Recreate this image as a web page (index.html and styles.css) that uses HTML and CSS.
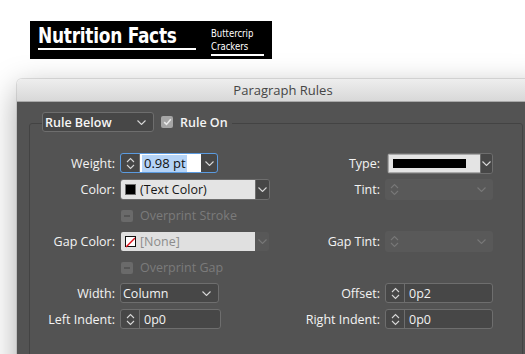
FILE: index.html
```html
<!DOCTYPE html>
<html lang="en">
<head>
  <meta charset="UTF-8">
  <title>Paragraph Rules</title>
  <link rel="stylesheet" href="styles.css">
</head>
<body>

  <div class="sample">
    <div class="sample-main"><span>Nutrition Facts</span></div>
    <div class="sample-side"><span>Buttercrip<br>Crackers</span></div>
  </div>

  <div class="dialog">
    <div class="titlebar">Paragraph Rules</div>
    <div class="panel">
      <div class="group">

        <div class="group-head">
          <div class="field dark select rule-select">
            <span class="text bold">Rule Below</span>
            <svg class="chev" width="9" height="5" viewBox="0 0 9 5"><path d="M.5.5 4.5 4.5 8.5.5"/></svg>
          </div>
          <span class="check on">
            <svg width="9" height="8" viewBox="0 0 9 8"><path d="M1.2 4.2 3.5 6.4 7.8 1.2"/></svg>
          </span>
          <span class="head-label">Rule On</span>
        </div>

        <div class="grid">
          <!-- row 1 -->
          <div class="lbl">Weight:</div>
          <div class="field focus w-98">
            <span class="spin">
              <svg width="9" height="13" viewBox="0 0 9 13"><path d="M1 5 4.5 1.5 8 5M1 8 4.5 11.5 8 8"/></svg>
            </span>
            <span class="input"><span class="sel">0.98 pt</span></span>
            <span class="drop">
              <svg class="chev" width="9" height="5" viewBox="0 0 9 5"><path d="M.5.5 4.5 4.5 8.5.5"/></svg>
            </span>
          </div>
          <div class="lbl">Type:</div>
          <div class="field light type">
            <span class="body"><span class="line-swatch"></span></span>
            <span class="drop">
              <svg class="chev" width="9" height="5" viewBox="0 0 9 5"><path d="M.5.5 4.5 4.5 8.5.5"/></svg>
            </span>
          </div>

          <!-- row 2 -->
          <div class="lbl">Color:</div>
          <div class="field light w-150">
            <span class="body"><span class="swatch black"></span><span class="text">(Text Color)</span></span>
            <span class="drop">
              <svg class="chev" width="9" height="5" viewBox="0 0 9 5"><path d="M.5.5 4.5 4.5 8.5.5"/></svg>
            </span>
          </div>
          <div class="lbl">Tint:</div>
          <div class="field off">
            <span class="spin">
              <svg width="9" height="13" viewBox="0 0 9 13"><path d="M1 5 4.5 1.5 8 5M1 8 4.5 11.5 8 8"/></svg>
            </span>
            <span class="grow"></span>
            <svg class="chev" width="9" height="5" viewBox="0 0 9 5"><path d="M.5.5 4.5 4.5 8.5.5"/></svg>
          </div>

          <!-- row 3 -->
          <div class="option span-right">
            <span class="check dim"></span>Overprint Stroke
          </div>

          <!-- row 4 -->
          <div class="lbl">Gap Color:</div>
          <div class="field light off-light w-150">
            <span class="body">
              <span class="swatch none">
                <svg width="11" height="11" viewBox="0 0 11 11"><path d="M0 11 11 0"/></svg>
              </span>
              <span class="text">[None]</span>
            </span>
            <span class="drop">
              <svg class="chev" width="9" height="5" viewBox="0 0 9 5"><path d="M.5.5 4.5 4.5 8.5.5"/></svg>
            </span>
          </div>
          <div class="lbl">Gap Tint:</div>
          <div class="field off">
            <span class="spin">
              <svg width="9" height="13" viewBox="0 0 9 13"><path d="M1 5 4.5 1.5 8 5M1 8 4.5 11.5 8 8"/></svg>
            </span>
            <span class="grow"></span>
            <svg class="chev" width="9" height="5" viewBox="0 0 9 5"><path d="M.5.5 4.5 4.5 8.5.5"/></svg>
          </div>

          <!-- row 5 -->
          <div class="option span-right">
            <span class="check dim"></span>Overprint Gap
          </div>

          <!-- row 6 -->
          <div class="lbl">Width:</div>
          <div class="field dark select w-99">
            <span class="text">Column</span>
            <svg class="chev" width="9" height="5" viewBox="0 0 9 5"><path d="M.5.5 4.5 4.5 8.5.5"/></svg>
          </div>
          <div class="lbl">Offset:</div>
          <div class="field dark">
            <span class="spin">
              <svg width="9" height="13" viewBox="0 0 9 13"><path d="M1 5 4.5 1.5 8 5M1 8 4.5 11.5 8 8"/></svg>
            </span>
            <span class="value">0p2</span>
          </div>

          <!-- row 7 -->
          <div class="lbl">Left Indent:</div>
          <div class="field dark w-101">
            <span class="spin">
              <svg width="9" height="13" viewBox="0 0 9 13"><path d="M1 5 4.5 1.5 8 5M1 8 4.5 11.5 8 8"/></svg>
            </span>
            <span class="value">0p0</span>
          </div>
          <div class="lbl">Right Indent:</div>
          <div class="field dark">
            <span class="spin">
              <svg width="9" height="13" viewBox="0 0 9 13"><path d="M1 5 4.5 1.5 8 5M1 8 4.5 11.5 8 8"/></svg>
            </span>
            <span class="value">0p0</span>
          </div>
        </div>

      </div>
    </div>
  </div>

</body>
</html>
```

FILE: styles.css
```css
/* pagina */
body {
  margin: 0;
  background-color: #ffffff;
  font-family: 'Open Sans', 'Liberation Sans', sans-serif;
  overflow: hidden;
}

/* amostra de texto no topo */
.sample {
  display: flex;
  width: 242px;
  height: 38px;
  margin: 21px 0 0 30px;
  background-color: #000;
  color: #fff;
  font-family: 'DejaVu Sans', sans-serif;
  font-stretch: condensed;
}

.sample-main {
  width: 158px;
  height: 21px;
  margin: 5px 0 0 8px;
  padding-bottom: 1px;
  border-bottom: 2px solid #fff;
  font-size: 21px;
  font-weight: bold;
  line-height: 21px;
  white-space: nowrap;
}

.sample-main span {
  display: inline-block;
  transform: scaleX(0.9);
  transform-origin: left center;
  letter-spacing: -0.3px;
}

.sample-side {
  width: 53px;
  height: 26px;
  margin: 6px 0 0 15px;
  padding-bottom: 1px;
  border-bottom: 2px solid #fff;
  font-size: 11px;
  line-height: 13px;
  white-space: nowrap;
}

.sample-side span {
  display: inline-block;
  transform: scaleX(0.86);
  transform-origin: left center;
}

/* janela */
.dialog {
  width: 532px;
  margin: 20px 0 0 17px;
  border-radius: 5px 5px 0 0;
  box-shadow: 0 10px 32px rgba(0, 0, 0, 0.35), 0 0 0 1px rgba(0, 0, 0, 0.1);
}

.titlebar {
  height: 22px;
  line-height: 22px;
  text-align: center;
  font-size: 13px;
  color: #454545;
  background: linear-gradient(#eeeeee, #d8d8d8);
  border-bottom: 1px solid #a8a8a8;
  border-radius: 5px 5px 0 0;
}

.panel {
  height: 260px;
  padding: 21px 0 0 12px;
  background-color: #535353;
}

.group {
  width: 492px;
  height: 240px;
  border: 1px solid #434343;
  border-radius: 3px;
}

.group-head {
  display: flex;
  align-items: center;
  width: fit-content;
  height: 20px;
  margin: -12px 0 0 12px;
  padding-right: 4px;
  background-color: #535353;
}

.head-label {
  margin-left: 7px;
  color: #f4f4f4;
  font-size: 12.5px;
  font-weight: 600;
}

/* grade de campos */
.grid {
  display: grid;
  grid-template-columns: 85px 150px 105px 108px;
  grid-auto-rows: 21px;
  gap: 5px;
  margin-top: 21px;
}

.lbl {
  text-align: right;
  line-height: 21px;
  font-size: 12.5px;
  color: #f4f4f4;
  white-space: nowrap;
}

.option {
  grid-column: 2 / span 3;
  display: flex;
  align-items: center;
  padding-left: 1px;
  font-size: 12.5px;
  color: #7b7b7b;
}

.option .check {
  margin-right: 7px;
}

/* caixas de selecao */
.check {
  display: inline-flex;
  align-items: center;
  justify-content: center;
  width: 12px;
  height: 12px;
  border-radius: 2px;
  box-sizing: border-box;
}

.check.on {
  margin-left: 7px;
  background-color: #a6a6a6;
}

.check.on path {
  fill: none;
  stroke: #e9e9e9;
  stroke-width: 1.6;
}

.check.dim {
  background-color: #6a6a6a;
}

.check.dim::after {
  content: "";
  width: 6px;
  height: 2px;
  background-color: #555555;
}

/* campos */
.field {
  display: flex;
  align-items: stretch;
  height: 20px;
  box-sizing: border-box;
  border-radius: 3px;
  font-size: 12.5px;
  overflow: hidden;
}

.field svg path {
  fill: none;
  stroke: #d6d6d6;
  stroke-width: 1.1;
}

.w-98 { width: 98px; }
.w-99 { width: 99px; }
.w-101 { width: 101px; }
.w-150 { width: 150px; height: 21px; }

.field.dark {
  background-color: #474747;
  border: 1px solid #6e6e6e;
  color: #f2f2f2;
}

.field.select {
  align-items: center;
  justify-content: space-between;
  padding: 0 7px 0 2px;
}

.rule-select {
  width: 112px;
}

.text.bold {
  font-weight: 600;
  color: #f6f6f6;
}

.spin {
  display: flex;
  align-items: center;
  justify-content: center;
  width: 18px;
  flex: none;
  border-right: 1px solid #6e6e6e;
}

.value {
  display: flex;
  align-items: center;
  padding-left: 4px;
}

.field.focus {
  background-color: #474747;
  border: 1px solid #5b9be0;
}

.field.focus .input {
  display: flex;
  align-items: center;
  width: 59px;
  padding-left: 2px;
  background-color: #ffffff;
  color: #111;
  font-size: 13px;
}

.sel {
  padding: 0 1px 0 2px;
  line-height: 17px;
  background-color: #b4d3f7;
}

.drop {
  display: flex;
  align-items: center;
  justify-content: center;
  flex: 1;
}

.field.light {
  border: 1px solid #6e6e6e;
}

.field.light .body {
  display: flex;
  align-items: center;
  width: 130px;
  padding-left: 4px;
  background-color: #e4e4e4;
  color: #161616;
}

.field.light .drop {
  background-color: #474747;
  border-left: 1px solid #6e6e6e;
}

.field.type {
  width: 106px;
  margin-left: 2px;
  height: 21px;
}

.field.type .body {
  width: 87px;
  padding-left: 4px;
  border: 1px solid #a9a9a9;
  border-right: none;
}

.line-swatch {
  width: 73px;
  height: 9px;
  background-color: #000;
}

.swatch {
  width: 11px;
  height: 11px;
  margin-right: 4px;
  box-sizing: border-box;
  border: 1px solid #707070;
}

.swatch.black {
  background-color: #000;
}

.swatch.none {
  display: flex;
  background-color: #fff;
  border-color: #111;
}

.swatch.none path {
  stroke: #e0101a;
  stroke-width: 1.8;
}

/* campos desativados */
.field.off-light {
  border-color: transparent;
}

.field.off-light .body {
  background-color: #e0e0e0;
  color: #8c8c8c;
}

.field.off-light .drop {
  background-color: #585858;
  border-left: none;
}

.field.off {
  background-color: #595959;
  align-items: center;
  height: 21px;
  padding-right: 7px;
}

.field.off .spin {
  align-self: stretch;
  border-right: none;
  width: 19px;
}

.field.off svg path,
.field.off-light .drop svg path {
  stroke: #777777;
}

.grow {
  flex: 1;
}
```
